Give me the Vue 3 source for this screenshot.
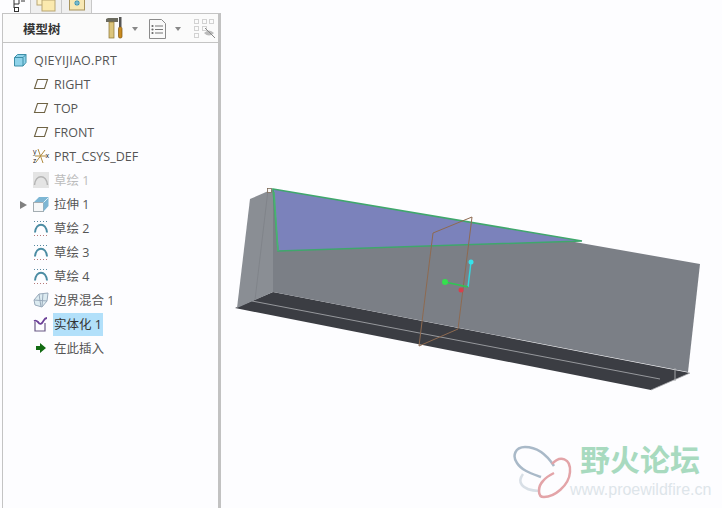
<template>
  <div class="app">
    <aside class="side">
      <div class="tabs">
        <div class="tab tab-active">
          <svg width="14" height="12" viewBox="0 0 14 12">
            <path d="M2 0v4h5v-4M2 4v4M2 8h3M9 1h4" fill="none" stroke="#333" stroke-width="1" />
            <rect x="2.500" y="7.500" width="4" height="4" fill="#fff" stroke="#333" />
          </svg>
        </div>
        <div class="tab tab-folder">
          <svg width="20" height="12" viewBox="0 0 20 12">
            <rect x="1" y="-3" width="10" height="8" fill="#fff3c8" stroke="#b9a673" />
            <rect x="6" y="0" width="13" height="11" fill="#fbe9ae" stroke="#b9a673" />
          </svg>
        </div>
        <div class="tab tab-star">
          <svg width="16" height="12" viewBox="0 0 16 12">
            <rect x="0.500" y="-2" width="15" height="12" fill="#f8e8b4" stroke="#a8935c" />
            <circle cx="8" cy="3" r="2.500" fill="#3d8fa8" />
            <path d="M8 0v6M5 3h6" stroke="#8cc7d8" />
          </svg>
        </div>
      </div>
      <div class="panel">
        <div class="head">
          <span class="title">模型树</span>
          <svg class="ico-tools" width="18" height="22" viewBox="0 0 18 22">
            <path d="M0 2l2-1h10v4h-12z" fill="#6b6b5f" />
            <rect x="3" y="5" width="5" height="16" fill="#dcc57c" stroke="#8a7434" stroke-width="0.700" />
            <rect x="13" y="0" width="2.500" height="10" fill="#555" />
            <rect x="12.500" y="10" width="3.500" height="11" rx="1.500" fill="#c98a1f" stroke="#7d5510" stroke-width="0.700" />
          </svg>
          <i class="caret caret-a"></i>
          <svg class="ico-doc" width="17" height="20" viewBox="0 0 17 20">
            <path d="M0.500 0.500h12l4 4v15h-16z" fill="#fafafa" stroke="#8b8b8b" />
            <path d="M6 7h8M6 10.500h8M6 14h8" stroke="#777" />
            <circle cx="3.500" cy="7" r="1.100" fill="#666" />
            <circle cx="3.500" cy="10.500" r="1.100" fill="#666" />
            <circle cx="3.500" cy="14" r="1.100" fill="#666" />
          </svg>
          <i class="caret caret-b"></i>
          <svg class="ico-hide" width="22" height="21" viewBox="0 0 22 21">
            <g fill="none" stroke="#d2d2d2">
              <rect x="0.500" y="1.500" width="4" height="4" />
              <rect x="0.500" y="8.500" width="4" height="4" />
              <rect x="0.500" y="15.500" width="4" height="4" />
              <rect x="8.500" y="1.500" width="4" height="4" />
              <rect x="15.500" y="1.500" width="4" height="4" />
              <rect x="8.500" y="8.500" width="4" height="4" />
            </g>
            <path d="M10 15q5-5 10 0q-5 5-10 0z" fill="#bbb" />
            <path d="M11 10l10 10" stroke="#888" />
          </svg>
        </div>
        <div class="tree">
          <div
            v-for="row in rows"
            :key="row.label"
            class="row"
            :class="{ root: row.root, dim: row.dim }"
          >
            <i v-if="row.arrow" class="arrow"></i>
            <svg class="ico" width="16" height="16" viewBox="0 0 16 16">
              <g v-if="row.icon === 'part'">
                <path d="M1.500 5.500l3-3h8.500v8l-3 3.500h-8.500z" fill="#8fd3ea" stroke="#3d8fa8" />
                <path d="M1.500 5.500h8.500v8.500M10 5.500l3-3" fill="none" stroke="#3d8fa8" />
              </g>
              <path v-else-if="row.icon === 'plane'" d="M4.500 3.500h10l-3 9h-10z" fill="none" stroke="#6e6244" stroke-width="1.100" />
              <g v-else-if="row.icon === 'csys'">
                <path d="M5 1l5 14M12 2l-9 12M2 8h11" stroke="#b08a3c" fill="none" />
                <text x="0" y="6" class="tiny">y</text>
                <text x="0" y="15" class="tiny">z</text>
                <text x="12.500" y="10" class="tiny">x</text>
              </g>
              <g v-else-if="row.icon === 'sketchOff'">
                <rect width="16" height="16" fill="#e4e4e4" />
                <path d="M1.500 13c1-11 12-11 13 0" fill="none" stroke="#b4b4b4" stroke-width="1.500" />
              </g>
              <g v-else-if="row.icon === 'sketch'">
                <path d="M2 12.500c1-10.500 11-10.500 12 0" fill="none" stroke="#4b8ca3" stroke-width="2" />
                <path d="M1 1.500h14" stroke="#5a8aa0" stroke-dasharray="1 2" />
                <path d="M1 15.500h14" stroke="#b57a7a" stroke-dasharray="1 2" />
              </g>
              <g v-else-if="row.icon === 'extrude'">
                <rect x="0.500" y="6.500" width="10" height="9" fill="#f6f7f8" stroke="#a4adb2" />
                <path d="M1 6l5-5h9.500v9l-5 5.500v-9.500z" fill="#7db6d4" />
                <path d="M10.500 6.500l5-5" stroke="#dff0f8" />
              </g>
              <g v-else-if="row.icon === 'blend'">
                <path d="M1 8l5-6 9-1-1 8-5 6-7-2z" fill="#dcebf1" stroke="#9ab" />
                <path d="M6 2l2 13M1 8l13 1M10 1.500l-1 13" stroke="#9ab" fill="none" />
              </g>
              <g v-else-if="row.icon === 'solid'">
                <path d="M1 5c2-1 3 0 4 1s2 3 4 1 2-5 5-5" fill="none" stroke="#6b3f97" stroke-width="1.800" />
                <path d="M2 6v9h10v-8" fill="none" stroke="#6b5a86" stroke-width="1.200" />
              </g>
              <path v-else d="M3 6h4v-3l6 5-6 5v-3h-4z" fill="#136b13" />
            </svg>
            <span class="label" :class="{ sel: row.sel }">{{ row.label }}</span>
          </div>
        </div>
      </div>
    </aside>

    <main class="view">
      <svg class="model" width="501" height="508" viewBox="221 0 501 508">
        <!-- 底面 -->
        <polygon points="235,308 273,292 690,373 651,390" fill="#3b3d43" />
        <path d="M252,301 L660,379" stroke="#96989c" stroke-width="1" fill="none" />
        <path d="M651,390 L690,373" stroke="#a8aaad" stroke-width="0.800" fill="none" />
        <!-- 左面 -->
        <polygon points="250,199 273,189 273,292 237,308" fill="#8a8e94" />
        <path d="M268,190 L255,300" stroke="#80848a" stroke-width="1" fill="none" />
        <!-- 前面 -->
        <polygon points="273,189 700,264 688,372 273,292" fill="#7b7f86" />
        <polygon points="273,189 582,241 278,251" fill="#7b82bb" />
        <polygon points="273,189 582,241 278,251" fill="none" stroke="#3fa76c" stroke-width="1.500" />
        <path d="M274,192 L278,251" stroke="#4ab36f" stroke-width="1.500" fill="none" />
        <rect x="267.500" y="188.500" width="4" height="4" fill="#f4f4f4" stroke="#7d6a58" stroke-width="0.800" />
        <path d="M675,368 L675,381" stroke="#a4a6a9" fill="none" stroke-width="1" />
        <!-- 基准平面 -->
        <polygon points="472,217 433,233 419,346 458,329" fill="none" stroke="#8e6a50" stroke-width="1" />
        <!-- 坐标系 -->
        <path d="M468,287 L471,262" stroke="#35d8e0" stroke-width="1.500" />
        <path d="M468,287 L445,282" stroke="#2fc653" stroke-width="1.500" />
        <circle cx="471" cy="262" r="2.500" fill="#35e4ec" />
        <circle cx="445" cy="282" r="3" fill="#35e04e" />
        <circle cx="461" cy="290" r="2.500" fill="#d8404c" />
      </svg>

      <div class="mark">
        <svg class="logo" width="62" height="62" viewBox="0 0 62 62">
          <path d="M41 22C32 8 22 3 12 3C2 3-1 12 4 19C9 27 20 30 28 33" fill="none" stroke="#a9b9c8" stroke-width="2.500" />
          <path d="M10 30C4 38 8 46 26 47" fill="none" stroke="#d8dfe6" stroke-width="2.500" />
          <path d="M39 20C47 11 58 14 57 28C56 42 41 53 31 53C24 53 25 42 30 37C33 33 37 31 41 29" fill="none" stroke="#e3a4a8" stroke-width="2.500" />
        </svg>
        <div class="mark-cn">野火论坛</div>
        <div class="mark-en">www.proewildfire.cn</div>
      </div>
    </main>
  </div>
</template>

<script setup>
const rows = [
  { label: 'QIEYIJIAO.PRT', icon: 'part', root: true },
  { label: 'RIGHT', icon: 'plane' },
  { label: 'TOP', icon: 'plane' },
  { label: 'FRONT', icon: 'plane' },
  { label: 'PRT_CSYS_DEF', icon: 'csys' },
  { label: '草绘 1', icon: 'sketchOff', dim: true },
  { label: '拉伸 1', icon: 'extrude', arrow: true },
  { label: '草绘 2', icon: 'sketch' },
  { label: '草绘 3', icon: 'sketch' },
  { label: '草绘 4', icon: 'sketch' },
  { label: '边界混合 1', icon: 'blend' },
  { label: '实体化 1', icon: 'solid', sel: true },
  { label: '在此插入', icon: 'insert' },
]
</script>

<style>
html,
body {
  margin: 0;
  background: #fdfdff;
}
</style>

<style scoped>
.app {
  display: flex;
  width: 722px;
  height: 508px;
  overflow: hidden;
  background: #fdfdff;
  font-family: "Open Sans", "Noto Sans CJK SC", sans-serif;
  font-size: 12.500px;
  color: #555;
}

.side {
  width: 221px;
  flex: none;
  display: flex;
  flex-direction: column;
  padding-left: 2px;
  box-sizing: border-box;
}

.tabs {
  height: 13px;
  display: flex;
  padding-left: 6px;
  box-sizing: border-box;
  flex: none;
}

.tab {
  height: 13px;
  display: flex;
  justify-content: center;
  overflow: hidden;
  box-sizing: border-box;
  background: #efefef;
  border-right: 1px solid #c8c8c8;
}

.tab-active {
  width: 23px;
  background: #fdfdff;
}

.tab-folder {
  width: 31px;
}

.tab-star {
  width: 30px;
}

.panel {
  flex: 1;
  border: 1px solid #c4c4c4;
  border-right: 3px solid #c2c2c2;
  border-bottom: 0;
  box-sizing: border-box;
  min-height: 0;
}

.head {
  height: 28px;
  position: relative;
  border-bottom: 1px solid #c4c4c4;
  display: flex;
  align-items: center;
  background: #fbfbfb;
}

.title {
  margin-left: 20px;
  font-size: 12.500px;
  font-weight: 700;
  color: #333;
}

.ico-tools {
  position: absolute;
  left: 103px;
  top: 3px;
}

.ico-doc {
  position: absolute;
  left: 146px;
  top: 5px;
}

.ico-hide {
  position: absolute;
  left: 191px;
  top: 4px;
}

.caret {
  position: absolute;
  top: 13px;
  border-left: 3.500px solid transparent;
  border-right: 3.500px solid transparent;
  border-top: 4px solid #888;
}

.caret-a {
  left: 129px;
}

.caret-b {
  left: 172px;
}

.tree {
  padding-top: 5px;
}

.row {
  height: 24px;
  display: flex;
  align-items: center;
  padding-left: 30px;
}

.row.root {
  padding-left: 10px;
}

.row.root .label {
  letter-spacing: 0.200px;
}

.row.dim {
  color: #bbb;
}

.arrow {
  height: 0;
  width: 7px;
  margin: 1px 6px 0 -13px;
  border-left: 7px solid #808080;
  border-top: 4.500px solid transparent;
  border-bottom: 4.500px solid transparent;
  box-sizing: border-box;
}

.ico {
  flex: none;
  margin-right: 4px;
  overflow: visible;
}

.tiny {
  font-size: 7px;
  fill: #222;
}

.label {
  height: 23px;
  line-height: 23px;
  padding: 0 1px;
  white-space: nowrap;
}

.sel {
  background: #b2e0fa;
  color: #333;
}

.view {
  flex: 1;
  position: relative;
  min-width: 0;
}

.model {
  display: block;
}

.mark {
  position: absolute;
  left: 289px;
  top: 442px;
  width: 211px;
  height: 62px;
}

.logo {
  position: absolute;
  left: 3px;
  top: 2px;
}

.mark-cn {
  position: absolute;
  left: 70px;
  top: 0;
  font-size: 30px;
  line-height: 36px;
  font-weight: 700;
  color: #a8dabf;
  white-space: nowrap;
}

.mark-en {
  position: absolute;
  left: 60px;
  top: 39px;
  font-family: "Liberation Sans", sans-serif;
  font-size: 16px;
  line-height: 18px;
  color: #dde5ea;
  white-space: nowrap;
}
</style>
